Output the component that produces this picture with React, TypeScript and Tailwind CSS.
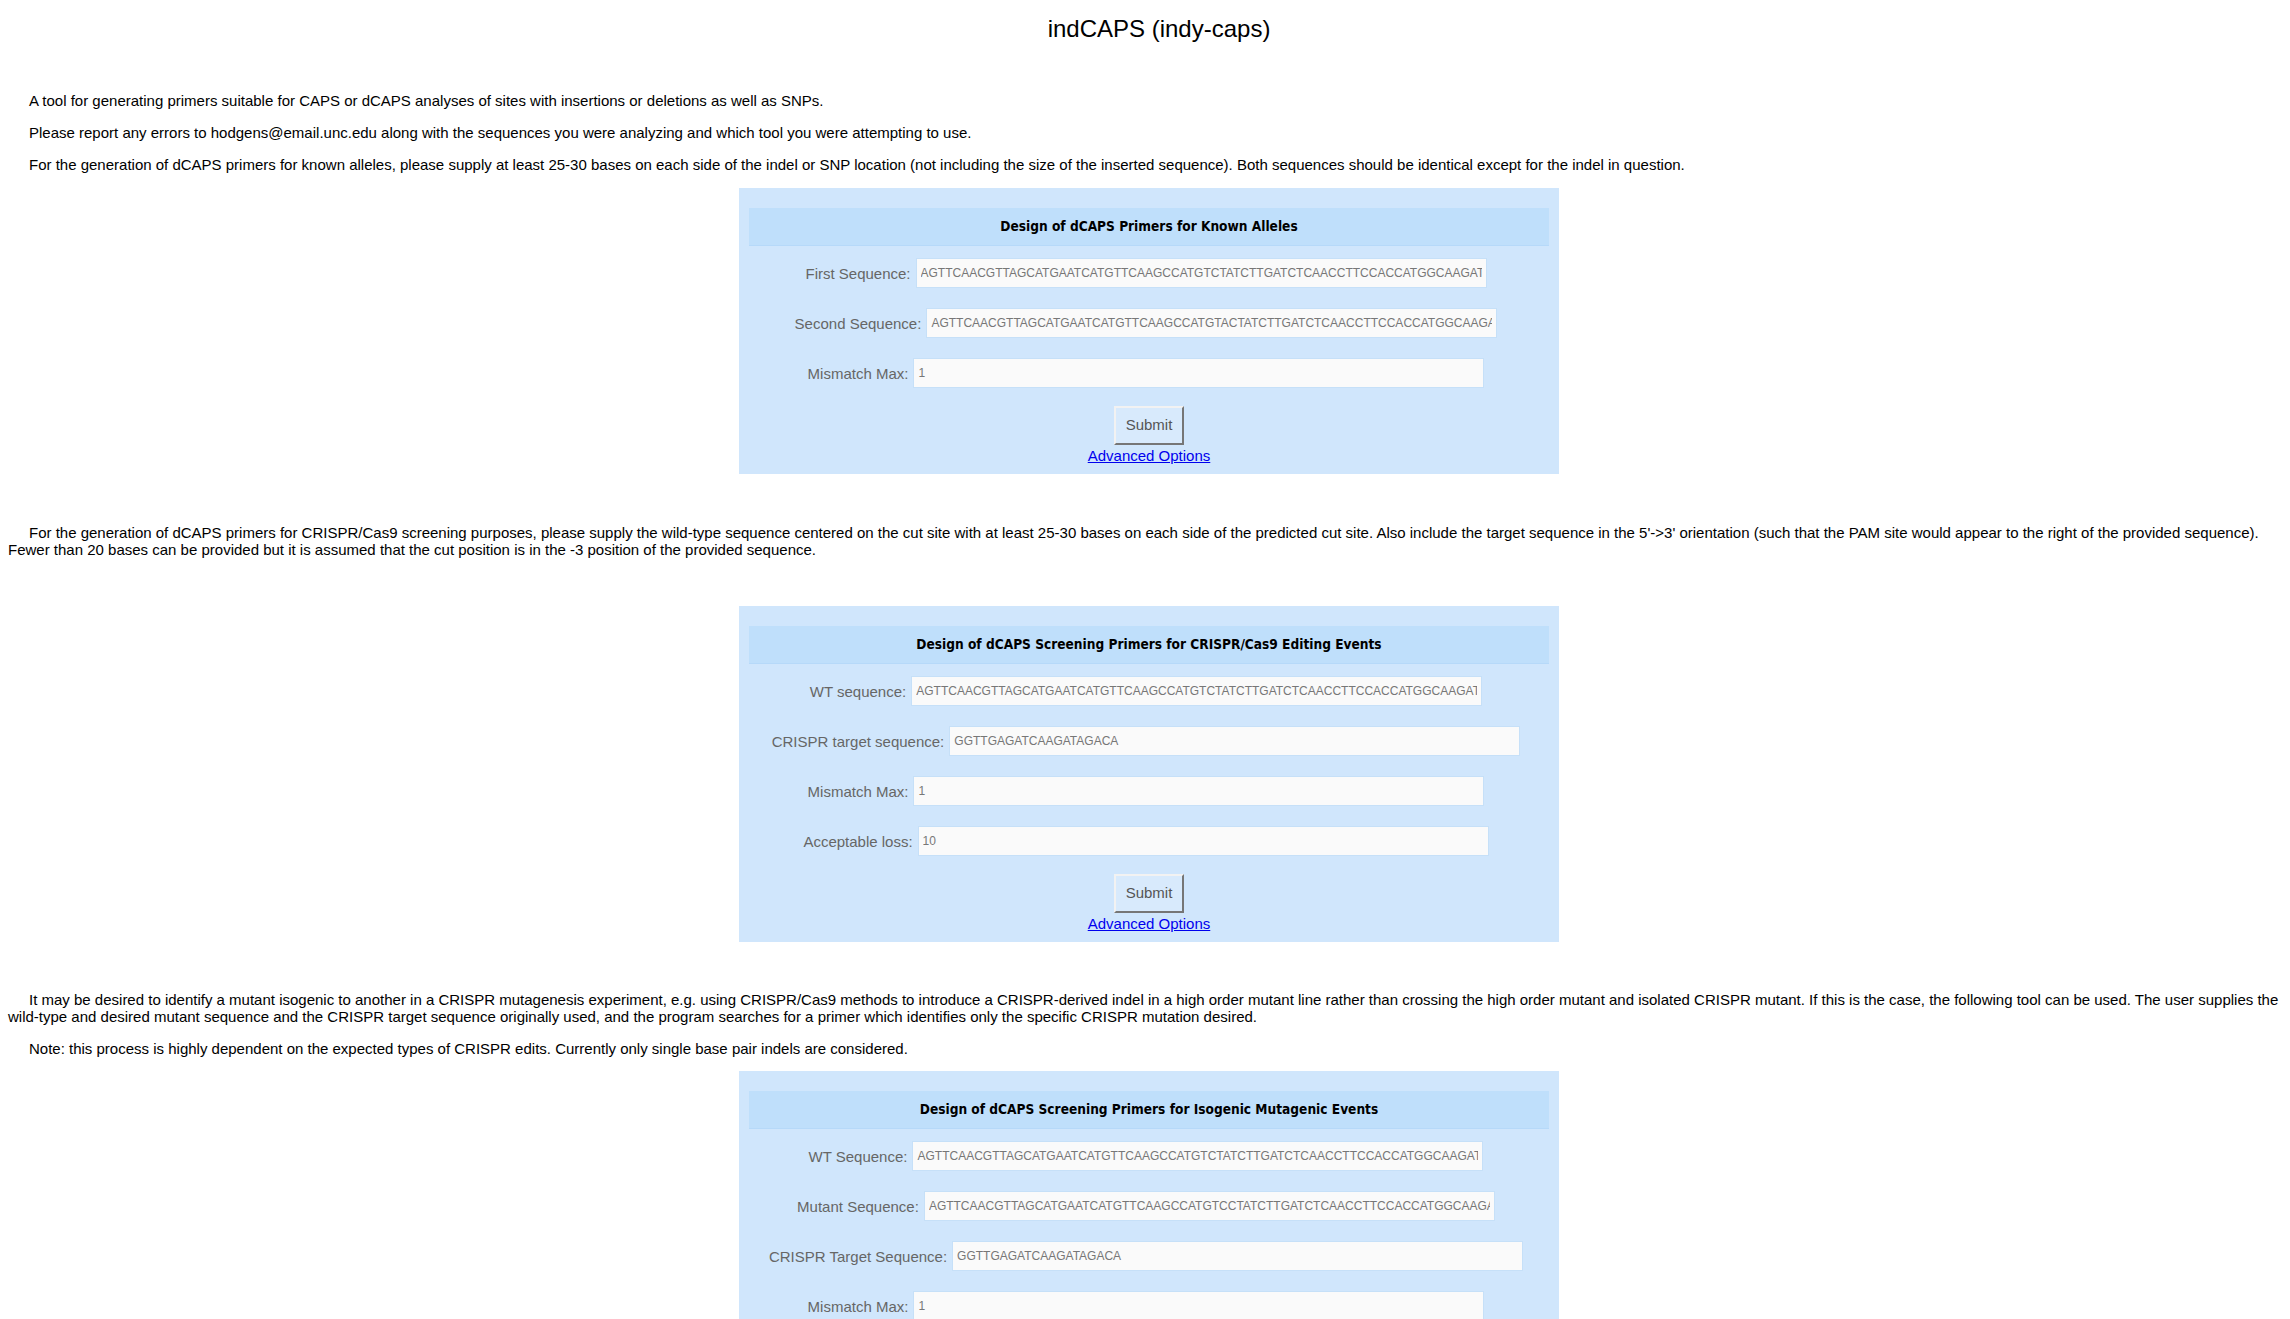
import React from 'react';

type Field = { label: string; value: string };

const WT = 'AGTTCAACGTTAGCATGAATCATGTTCAAGCCATGTCTATCTTGATCTCAACCTTCCACCATGGCAAGATGGTTCTCAAGAAGCTTG';

const knownFields: Field[] = [
  { label: 'First Sequence:', value: WT },
  { label: 'Second Sequence:', value: 'AGTTCAACGTTAGCATGAATCATGTTCAAGCCATGTACTATCTTGATCTCAACCTTCCACCATGGCAAGATGGTTCTCAAGAAGCTTG' },
  { label: 'Mismatch Max:', value: '1' },
];

const crisprFields: Field[] = [
  { label: 'WT sequence:', value: WT },
  { label: 'CRISPR target sequence:', value: 'GGTTGAGATCAAGATAGACA' },
  { label: 'Mismatch Max:', value: '1' },
  { label: 'Acceptable loss:', value: '10' },
];

const isogenicFields: Field[] = [
  { label: 'WT Sequence:', value: WT },
  { label: 'Mutant Sequence:', value: 'AGTTCAACGTTAGCATGAATCATGTTCAAGCCATGTCCTATCTTGATCTCAACCTTCCACCATGGCAAGATGGTTCTCAAGAAGCTTG' },
  { label: 'CRISPR Target Sequence:', value: 'GGTTGAGATCAAGATAGACA' },
  { label: 'Mismatch Max:', value: '1' },
];

function Row({ label, value }: Field) {
  return (
    <div className="flex items-center justify-center gap-[5px] py-[10px] pr-[6px]">
      <label className="text-[15px] leading-[17px] text-[#666666]">{label}</label>
      <input
        type="text"
        defaultValue={value}
        className="w-[571px] h-[30px] bg-[#fafafa] border border-[#c6e0f8] px-[4px] text-[12px] text-[#777777] outline-none font-['Liberation_Sans',Arial,sans-serif]"
      />
    </div>
  );
}

function Panel({ title, fields }: { title: string; fields: Field[] }) {
  return (
    <div className="flex justify-center pl-[8px]">
      <div className="w-[820px] bg-[#d0e6fc] pt-[20px] px-[10px] pb-[10px] flex flex-col">
        <div className="h-[38px] bg-[#bfdffb] border-b border-[#b6d9f9] flex items-center justify-center mb-[2px]">
          <span className="text-[13.6px] font-bold text-black font-['DejaVu_Sans_Condensed','DejaVu_Sans',sans-serif]">
            {title}
          </span>
        </div>
        {fields.map((f) => (
          <Row key={f.label} label={f.label} value={f.value} />
        ))}
        <div className="flex flex-col items-center mt-[8px]">
          <button className="h-[39px] px-[10px] bg-[#d8eafc] border-2 border-t-[#f2f2f2] border-l-[#f2f2f2] border-b-[#767676] border-r-[#767676] text-[15px] text-[#555555]">
            Submit
          </button>
          <a href="#" className="mt-[2px] text-[15px] leading-[17px] text-[#0000ee] underline">
            Advanced Options
          </a>
        </div>
      </div>
    </div>
  );
}

export default function App() {
  return (
    <div className="bg-white min-h-screen m-[8px] mt-0 text-black font-['Liberation_Sans',Arial,sans-serif]">
      <h2 className="pt-[15px] pl-[28px] text-center text-[24px] leading-[28px] font-normal">indCAPS (indy-caps)</h2>

      <div className="mt-[49px] text-[15px] leading-[17px] flex flex-col gap-[15px] indent-[21px]">
        <p>A tool for generating primers suitable for CAPS or dCAPS analyses of sites with insertions or deletions as well as SNPs.</p>
        <p>Please report any errors to hodgens@email.unc.edu along with the sequences you were analyzing and which tool you were attempting to use.</p>
        <p>
          For the generation of dCAPS primers for known alleles, please supply at least 25-30 bases on each side of the indel or SNP location (not
          including the size of the inserted sequence). Both sequences should be identical except for the indel in question.
        </p>
      </div>

      <div className="mt-[15px]">
        <Panel title="Design of dCAPS Primers for Known Alleles" fields={knownFields} />
      </div>

      <p className="mt-[50px] text-[15px] leading-[17px] indent-[21px]">
        For the generation of dCAPS primers for CRISPR/Cas9 screening purposes, please supply the wild-type sequence centered on the cut site with at
        least 25-30 bases on each side of the predicted cut site. Also include the target sequence in the 5'-&gt;3' orientation (such that the PAM site
        would appear to the right of the provided sequence). Fewer than 20 bases can be provided but it is assumed that the cut position is in the -3
        position of the provided sequence.
      </p>

      <div className="mt-[48px]">
        <Panel title="Design of dCAPS Screening Primers for CRISPR/Cas9 Editing Events" fields={crisprFields} />
      </div>

      <div className="mt-[49px] text-[15px] leading-[17px] flex flex-col gap-[15px] indent-[21px]">
        <p>
          It may be desired to identify a mutant isogenic to another in a CRISPR mutagenesis experiment, e.g. using CRISPR/Cas9 methods to introduce a
          CRISPR-derived indel in a high order mutant line rather than crossing the high order mutant and isolated CRISPR mutant. If this is the case,
          the following tool can be used. The user supplies the wild-type and desired mutant sequence and the CRISPR target sequence originally used,
          and the program searches for a primer which identifies only the specific CRISPR mutation desired.
        </p>
        <p>Note: this process is highly dependent on the expected types of CRISPR edits. Currently only single base pair indels are considered.</p>
      </div>

      <div className="mt-[14px] pb-[40px]">
        <Panel title="Design of dCAPS Screening Primers for Isogenic Mutagenic Events" fields={isogenicFields} />
      </div>
    </div>
  );
}
